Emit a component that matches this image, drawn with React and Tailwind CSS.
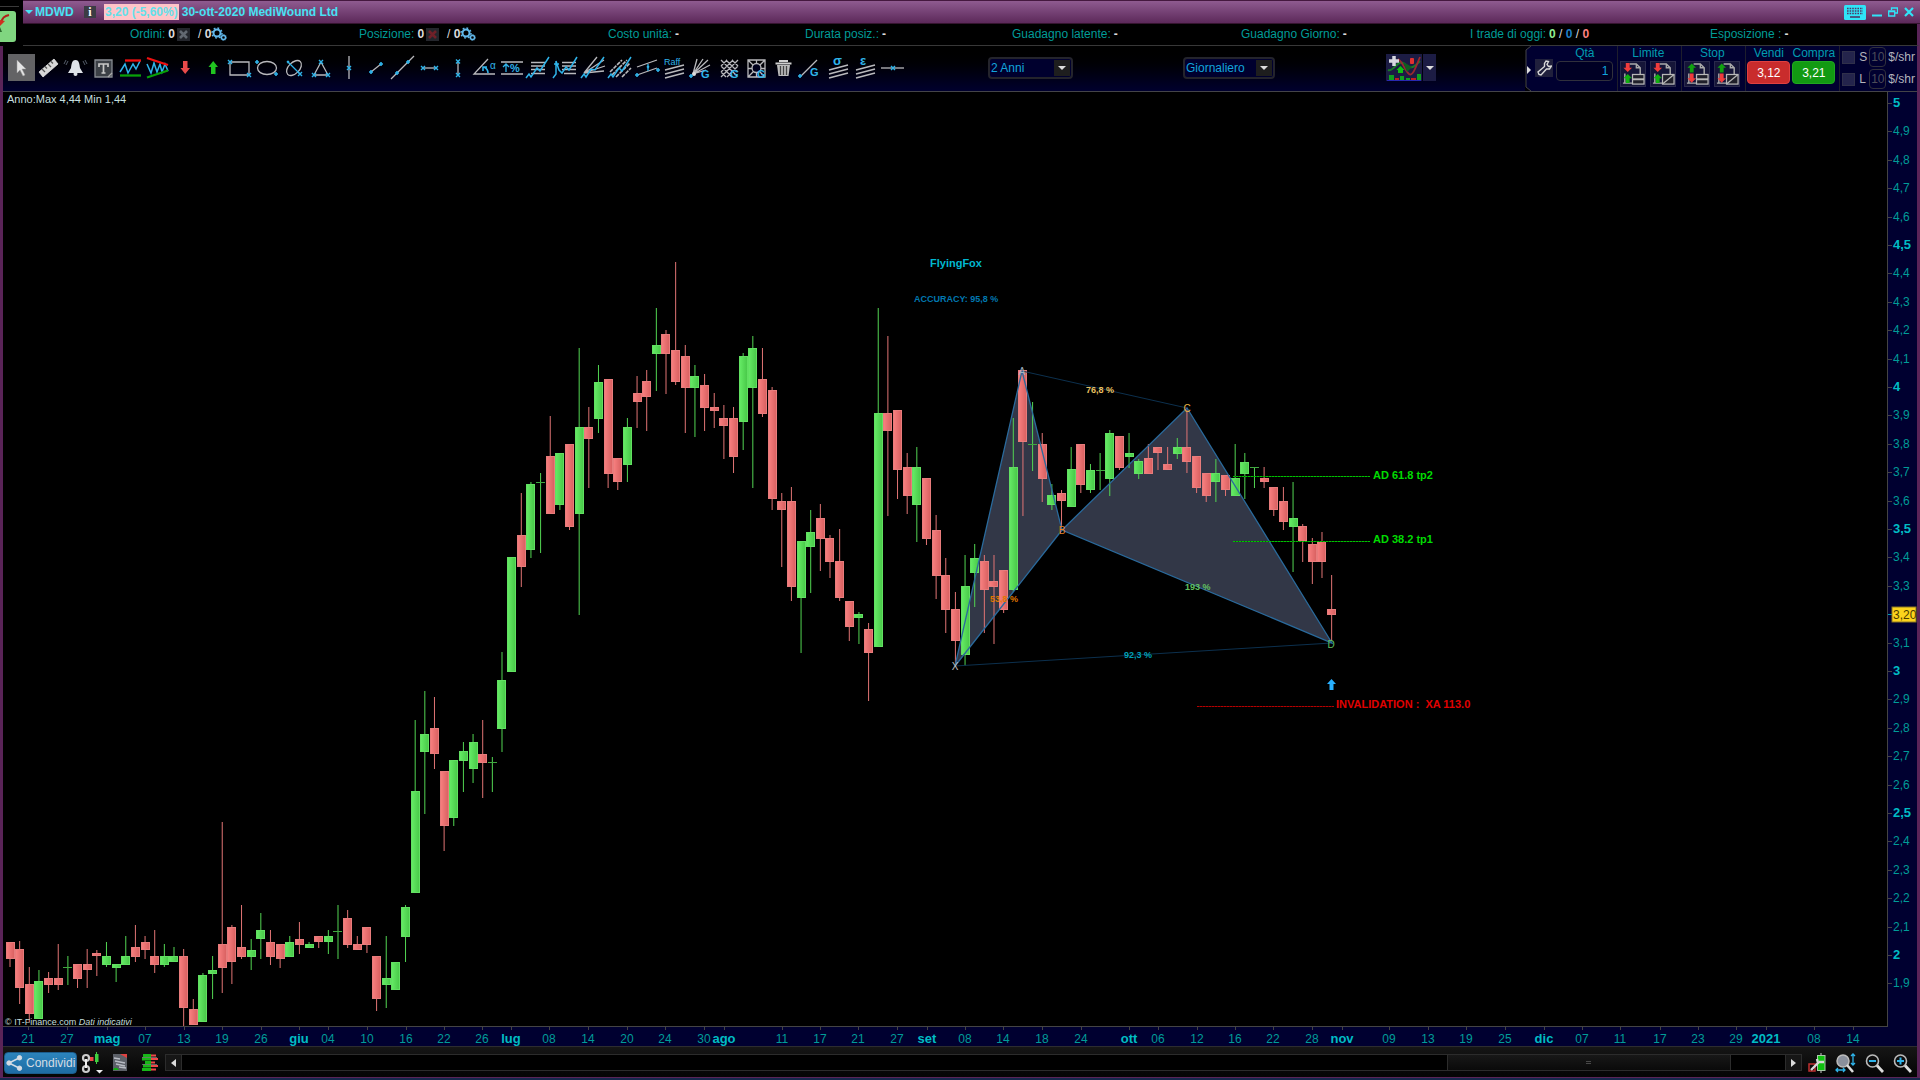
import React from "react";

const FONT = "font-['Liberation_Sans',Arial,sans-serif]";
const CYAN = "#2fb4ea";
const GREY = "#b9b9bd";

/* ---------- market data: [kind, high, bodyTop, bodyBottom, low] ---------- */
const CANDLES = [
  ["r", 942, 942, 959, 967], ["r", 941, 949, 988, 1004], ["r", 967, 984, 1014, 1022], ["g", 970, 981, 1019, 1019],
  ["r", 972, 978, 985, 993], ["r", 944, 978, 985, 990], ["g", 956, 967, 967, 985], ["r", 964, 964, 979, 988],
  ["r", 949, 964, 970, 988], ["r", 950, 953, 956, 976], ["g", 942, 956, 965, 967], ["g", 964, 964, 968, 982],
  ["g", 936, 956, 965, 965], ["r", 925, 947, 957, 962], ["r", 936, 942, 950, 959], ["r", 930, 956, 965, 973],
  ["g", 944, 956, 965, 967], ["g", 947, 956, 962, 962], ["r", 949, 956, 1008, 1026], ["r", 999, 1009, 1025, 1025],
  ["g", 973, 975, 1022, 1022], ["g", 956, 970, 974, 999], ["r", 822, 944, 968, 993], ["r", 925, 927, 962, 984],
  ["r", 905, 947, 957, 959], ["g", 939, 950, 957, 970], ["g", 913, 930, 939, 959], ["r", 930, 942, 957, 965],
  ["r", 944, 944, 959, 968], ["g", 936, 942, 957, 957], ["r", 922, 939, 945, 954], ["g", 942, 944, 948, 948],
  ["r", 936, 936, 942, 948], ["g", 930, 936, 942, 954], ["g", 905, 931, 931, 959], ["r", 910, 918, 945, 948],
  ["r", 936, 944, 950, 950], ["r", 927, 927, 945, 953], ["r", 956, 956, 999, 1011], ["g", 936, 978, 985, 1008],
  ["g", 962, 962, 990, 990], ["g", 905, 907, 937, 962], ["g", 720, 791, 893, 893], ["g", 691, 734, 752, 814],
  ["r", 697, 728, 754, 769], ["r", 771, 771, 826, 851], ["g", 760, 760, 818, 826], ["g", 742, 751, 761, 792],
  ["g", 734, 742, 769, 783], ["r", 720, 754, 763, 798], ["g", 757, 762, 762, 792], ["g", 652, 680, 729, 752],
  ["g", 557, 557, 672, 672], ["r", 493, 535, 567, 587], ["g", 482, 484, 550, 558], ["g", 473, 482, 482, 553],
  ["r", 416, 456, 514, 514], ["g", 453, 453, 505, 510], ["r", 444, 444, 527, 530], ["g", 348, 427, 514, 615],
  ["r", 407, 427, 439, 488], ["g", 365, 382, 419, 433], ["r", 379, 379, 474, 488], ["r", 458, 458, 482, 490],
  ["g", 418, 427, 465, 482], ["r", 376, 393, 402, 428], ["r", 370, 381, 397, 431], ["g", 308, 345, 354, 391],
  ["r", 330, 334, 354, 394], ["r", 262, 350, 382, 385], ["r", 345, 356, 388, 433], ["g", 365, 376, 388, 437],
  ["r", 374, 385, 408, 431], ["r", 393, 407, 411, 428], ["r", 405, 418, 426, 459], ["r", 407, 418, 457, 473],
  ["g", 353, 356, 422, 450], ["g", 336, 348, 388, 488], ["r", 348, 379, 414, 417], ["r", 387, 390, 499, 510],
  ["r", 493, 501, 510, 567], ["r", 487, 501, 587, 601], ["g", 541, 541, 598, 653], ["g", 510, 532, 547, 593],
  ["r", 504, 518, 539, 571], ["r", 535, 538, 562, 578], ["r", 529, 561, 598, 601], ["r", 601, 601, 627, 641],
  ["g", 612, 614, 618, 644], ["r", 623, 629, 653, 701], ["g", 308, 413, 647, 647], ["r", 336, 413, 431, 516],
  ["r", 410, 410, 470, 499], ["r", 453, 467, 496, 514], ["g", 447, 467, 505, 542], ["r", 478, 478, 539, 545],
  ["r", 515, 530, 576, 599], ["r", 558, 575, 610, 633], ["r", 592, 609, 641, 665], ["g", 555, 586, 655, 666],
  ["g", 544, 558, 573, 607], ["r", 555, 561, 590, 633], ["r", 555, 581, 587, 644], ["r", 570, 570, 610, 613],
  ["g", 418, 467, 590, 592], ["r", 370, 370, 442, 516], ["g", 402, 444, 444, 471], ["r", 433, 444, 479, 502],
  ["g", 484, 495, 505, 510], ["r", 490, 493, 501, 527], ["g", 447, 469, 507, 507], ["r", 444, 444, 485, 493],
  ["g", 464, 470, 490, 493], ["g", 453, 470, 470, 490], ["g", 430, 433, 479, 496], ["r", 436, 436, 468, 470],
  ["g", 433, 453, 457, 468], ["g", 459, 461, 474, 479], ["r", 444, 458, 474, 474], ["r", 447, 447, 453, 470],
  ["r", 447, 464, 470, 470], ["g", 438, 447, 454, 459], ["r", 410, 447, 462, 473], ["r", 456, 456, 488, 493],
  ["r", 473, 473, 496, 502], ["g", 459, 473, 482, 502], ["r", 475, 475, 490, 496], ["g", 444, 478, 496, 496],
  ["g", 453, 462, 474, 499], ["g", 467, 467, 467, 488], ["r", 467, 478, 482, 488], ["r", 487, 487, 510, 516],
  ["r", 487, 501, 522, 530], ["g", 482, 518, 527, 572], ["r", 524, 526, 541, 562], ["r", 538, 544, 562, 584],
  ["r", 532, 541, 562, 578], ["r", 575, 609, 615, 641],
];

const DATES = [
  ["21", 28], ["27", 67], ["mag", 107], ["07", 145], ["13", 184], ["19", 222], ["26", 261], ["giu", 299], ["04", 328],
  ["10", 367], ["16", 406], ["22", 444], ["26", 482], ["lug", 511], ["08", 549], ["14", 588], ["20", 627], ["24", 665],
  ["30", 704], ["ago", 724], ["11", 782], ["17", 820], ["21", 858], ["27", 897], ["set", 927], ["08", 965],
  ["14", 1003], ["18", 1042], ["24", 1081], ["ott", 1129], ["06", 1158], ["12", 1197], ["16", 1235], ["22", 1273],
  ["28", 1312], ["nov", 1342], ["09", 1389], ["13", 1428], ["19", 1466], ["25", 1505], ["dic", 1544], ["07", 1582],
  ["11", 1620], ["17", 1660], ["23", 1698], ["29", 1736], ["2021", 1766], ["08", 1814], ["14", 1853],
];
const isMajor = (t) => /[a-z]/.test(t) || t.length === 4;

/* ---------- small marks shared by the drawing tools ---------- */
const X = ({ x, y, s = 2 }) => (
  <path d={`M${x - s} ${y - s}l${2 * s} ${2 * s}M${x + s} ${y - s}l${-2 * s} ${2 * s}`} stroke={CYAN} strokeWidth="1.4" />
);
const P = ({ x, y, s = 2 }) => (
  <path d={`M${x - s} ${y}h${2 * s}M${x} ${y - s}v${2 * s}`} stroke={CYAN} strokeWidth="1.6" />
);
const T = ({ x, y, size = 10, children }) => (
  <text x={x} y={y} fontSize={size} fontWeight="bold" fill={CYAN} stroke="none">{children}</text>
);
const Lines3 = ({ y = 11 }) => (
  <path d={`M4 ${y + 5}L23 ${y}M4 ${y + 9}L23 ${y + 4}M4 ${y + 13}L23 ${y + 8}`} stroke={GREY} strokeWidth="1.5" />
);

const TOOLS = [
  ["Cursore", <path key="a" d="M9 6v13l3-3 3 6 2-1-3-6h4z" fill="#e4e4e4" stroke="#999" strokeWidth=".5" />],
  ["Righello", <g key="a"><path d="M4 18L19 5l4 5L8 23z" fill="#d8d8d8" stroke="#f2f2f2" strokeWidth=".7" /><path d="M7 15l3 3M10 12.500l2 2M13 10l3 3M16 7.500l2 2" stroke="#555" /></g>],
  ["Allarme", <g key="a"><path d="M13.500 6c-4 0-4 5-4.500 8l-3 5h15l-3-5c-.5-3-.5-8-4.500-8z" fill="#dfe3e8" stroke="none" /><circle cx="13.500" cy="20" r="2" fill="#dfe3e8" stroke="none" /><path d="M6 7l-2 4M4 6l-2 4M21 7l2 4M23 6l2 4" stroke="#6b7585" strokeWidth=".8" /></g>],
  ["Testo", <g key="a"><path d="M5 6h17v17H5z" fill="#3c4046" stroke="#878b91" /><path d="M9 13v-3h9v3M13.500 10v9M11.500 19h4" stroke="#c8c8c8" strokeWidth="1.700" /><path d="M18 23l4-4" stroke="#aaa" /></g>],
  ["Supporti e resistenze", <g key="a"><path d="M3 18L8 10l3 9 5-9 3 5 4-8" stroke={CYAN} strokeWidth="1.5" /><path d="M8 6.500h16" stroke="#f01010" strokeWidth="2.300" /><path d="M3 21.500h21" stroke="#08a008" strokeWidth="2.300" /></g>],
  ["Trend", <g key="a"><path d="M3 10l4 9 3-10 3 9 3-8 2 8 3-8 3 7" stroke={CYAN} strokeWidth="1.500" /><path d="M3 4l21 7" stroke="#f01010" strokeWidth="2.300" /><path d="M3 23.500l21-7" stroke="#08a008" strokeWidth="2.300" /></g>],
  ["Freccia giù", <path key="a" d="M12 7h4.500v7h2.500l-4.800 6-4.700-6H12z" fill="#e84a4a" stroke="none" />],
  ["Freccia su", <path key="a" d="M12 20h4.500v-7h2.500l-4.800-6-4.700 6H12z" fill="#20c420" stroke="none" />],
  ["Rettangolo", <g key="a"><path d="M4 8h19v13H4z" /><X x={4} y={8} /><X x={23} y={21} /></g>],
  ["Ellisse", <g key="a"><ellipse cx="14" cy="14" rx="9.500" ry="6.500" /><P x={4} y={8} /><P x={23} y={20} /></g>],
  ["Ellisse inclinata", <g key="a"><ellipse cx="14" cy="14" rx="9" ry="5.500" transform="rotate(-45 14 14)" /><path d="M8 8l12 12" stroke={CYAN} /><X x={8} y={8} s={1} /><X x={20} y={20} /></g>],
  ["Triangolo", <g key="a"><path d="M14 8L7 21h14z" /><X x={14} y={8} /><X x={7} y={21} /><X x={21} y={21} /></g>],
  ["Linea verticale", <g key="a"><path d="M14 2v23" /><X x={14} y={14} /></g>],
  ["Segmento", <g key="a"><path d="M9 18L19 10" /><P x={9} y={18} /><P x={19} y={10} /></g>],
  ["Retta", <g key="a"><path d="M2 25L25 2" /><P x={8} y={19} /><P x={19} y={8} /></g>],
  ["Segmento orizzontale", <g key="a"><path d="M6 14h15" /><X x={7} y={14} /><X x={20} y={14} /></g>],
  ["Segmento verticale", <g key="a"><path d="M14 7v14" /><X x={14} y={7.500} /><X x={14} y={21} /></g>],
  ["Angolo", <g key="a"><path d="M17 5L3 20h21" /><path d="M17 19c0-3-2-5-4-6M12 17v-4h4" stroke={CYAN} strokeWidth="1.600" /><text x="19" y="15" fontSize="10" fill={CYAN} stroke="none">α</text></g>],
  ["Variazione percentuale", <g key="a"><path d="M3 8h22M3 20h22" /><path d="M8 18v-7M5 13l3-3 3 3" stroke={CYAN} /><T x={12} y={18} size={11}>%</T></g>],
  ["Ritracciamenti", <g key="a"><path d="M6 8.500h14M6 12h14M6 15.500h14M6 19.500h14" strokeWidth="1.500" /><path d="M1 24l3-4 2 3 6-9 3 3 9-14" stroke={CYAN} strokeWidth="1.500" /></g>],
  ["Proiezioni", <g key="a"><path d="M10 8.500h14M10 12h14M10 15.500h14M12 19.500h12" strokeWidth="1.500" /><path d="M1 24l3-4V7M2 10h5M4 7l3 9 3 3 4-6 3 3 8-13" stroke={CYAN} strokeWidth="1.500" /></g>],
  ["Ventaglio", <g key="a"><path d="M4 19L17 3M4 19L24 6M4 19L25 12M4 19l20-2" /><path d="M1 24l3-4 2 3 5-8 4 1 9-13" stroke={CYAN} strokeWidth="1.500" /></g>],
  ["Canali", <g key="a"><path d="M3 18L15 6M5 21L20 6M9 23L23 9M15 23l9-9" strokeDasharray="4 1" strokeWidth="1.600" /><path d="M1 24l3-4 2 3 6-9 3 3L24 3" stroke={CYAN} strokeWidth="1.500" /></g>],
  ["Canale parallelo", <g key="a"><path d="M3 13L23 6M3 21l20-7" /><path d="M14 10v7" stroke={CYAN} /><P x={3} y={21} /><P x={24} y={16} /><X x={14} y={13} s={1} /></g>],
  ["Canale Raff", <g key="a"><text x="3" y="11" fontSize="9" fill={CYAN} stroke="none">Raff</text><Lines3 /></g>],
  ["Ventaglio di Gann", <g key="a"><path d="M5 20L9 5M5 20L15 5M5 20L20 6M5 20L22 11M5 20l13-4" /><circle cx="6" cy="20" r="2" fill="#ddd" stroke="none" /><P x={3} y={22} /><T x={13} y={24} size={11}>G</T></g>],
  ["Griglia di Gann", <g key="a"><path d="M5 12l6-6M5 18L17 6M5 23L22 6M11 23l11-11M16 6l6 6M10 6l12 12M5 6l16 16M5 12l11 11M5 18l5 5" /><T x={14} y={24} size={11}>G</T></g>],
  ["Quadrato di Gann", <g key="a"><path d="M5 6h17v17H5zM5 6l17 17M22 6L5 23M13.500 6v17M5 14.500h17" /><circle cx="13.500" cy="14" r="4.500" fill="#00001c" /><T x={14} y={24} size={11}>G</T></g>],
  ["Elimina", <g key="a"><path d="M7 11h13l-1.500 11h-10z" fill="#bcbcbc" stroke="none" /><path d="M5.500 9.500h16M9 7h9" stroke="#d0d0d0" strokeWidth="2" /><path d="M10.500 12v9M13.500 12v9M16.500 12v9" stroke="#444" /></g>],
  ["Linea di Gann", <g key="a"><path d="M4 22L20 6" /><P x={3} y={22} /><T x={13} y={22} size={11}>G</T></g>],
  ["Deviazione standard", <g key="a"><T x={8} y={11} size={13}>σ</T><Lines3 /></g>],
  ["Errore standard", <g key="a"><T x={8} y={11} size={13}>ε</T><Lines3 /></g>],
  ["Linea orizzontale", <g key="a"><path d="M2 14h23" /><X x={14} y={14} /></g>],
];

function Gears() {
  return (
    <svg width="16" height="14" viewBox="0 0 16 14" fill="none" stroke="#62b8ea" aria-hidden="true">
      <circle cx="6" cy="6" r="3.500" strokeWidth="2" /><circle cx="6" cy="6" r="5" strokeWidth="1.500" strokeDasharray="1.800 2.100" />
      <circle cx="12.500" cy="10.500" r="2" strokeWidth="1.400" /><circle cx="12.500" cy="10.500" r="3" strokeWidth="1" strokeDasharray="1 1.300" />
    </svg>
  );
}

function Clear({ color, label }) {
  return (
    <button aria-label={label} className="mr-1 ml-0.5 flex size-[13px] items-center justify-center bg-[#24262c]">
      <svg width="11" height="11" viewBox="0 0 11 11" stroke={color} strokeWidth="2.600" aria-hidden="true"><path d="M2 2l7 7M9 2L2 9" /></svg>
    </button>
  );
}

function Stat({ label, children }) {
  return (
    <div className="flex items-center whitespace-pre">
      <span className="text-[#009c98]">{label}</span>
      <span className="ml-[3px] flex items-center font-bold text-[#dcdcdc]">{children}</span>
    </div>
  );
}

function Header() {
  return (
    <header className="flex">
      <div className="relative w-[23px] shrink-0 bg-black">
        <div className="mt-1.5 h-px w-[19px] bg-[#3a3a3a]" />
        <svg className="absolute top-[11px] left-0" width="16" height="31" viewBox="0 0 16 31" aria-hidden="true">
          <rect x="-6" width="22" height="31" rx="3" fill="#80d680" />
          <path d="M1 12c1-5 3-7 8-8" stroke="#b02018" strokeWidth="2.200" fill="none" /><path d="M0 9l5 1-5 5z" fill="#d03020" /><path d="M0 16l2 5H0z" fill="#2b6a2b" />
        </svg>
      </div>
      <div className="min-w-0 flex-1">
        <div className="flex h-6 items-center border-y border-t-[#45183f] border-b-[#35142f] bg-linear-to-b from-[#8f5b90] to-[#5c295a] pl-0.5 font-bold text-[#48e2f4]">
          <svg width="8" height="4" viewBox="0 0 8 4" aria-hidden="true"><path d="M0 0h8L4 4z" fill="#48e2f4" /></svg>
          <span className="ml-0.5 w-12">MDWD</span>
          <button aria-label="Informazioni" className="ml-px flex size-3 items-center justify-center bg-[#3c3c44] font-['Liberation_Serif',serif] text-xs text-white">i</button>
          <span className="ml-2 bg-[#ffc4c8] px-px text-[#62e0ea]">3,20 (-5,60%)</span>
          <span className="ml-[3px]">30-ott-2020 MediWound Ltd</span>
          <div className="mr-1.5 ml-auto flex items-center gap-1.5">
            <button aria-label="Tastiera">
              <svg width="22" height="15" viewBox="0 0 22 15" aria-hidden="true"><rect width="22" height="15" rx="1.500" fill="#30e4f8" /><path d="M3 3.500h16M3 6h16M3 8.500h16" stroke="#4c3a68" strokeWidth="1.500" strokeDasharray="1.600 1" /><path d="M6 12h10" stroke="#4c3a68" strokeWidth="1.600" /></svg>
            </button>
            <button aria-label="Riduci"><svg width="10" height="12" viewBox="0 0 10 12" aria-hidden="true"><path d="M0 9.500h10" stroke="#30e4f8" strokeWidth="2" /></svg></button>
            <button aria-label="Ripristina"><svg width="10" height="10" viewBox="0 0 10 10" fill="none" stroke="#30e4f8" strokeWidth="1.300" aria-hidden="true"><path d="M3.500 3V1h6v5H7M.7 4h6v5h-6zM.7 4.700h6" /></svg></button>
            <button aria-label="Chiudi"><svg width="10" height="10" viewBox="0 0 10 10" stroke="#30e4f8" strokeWidth="2.200" aria-hidden="true"><path d="M1 1l8 8M9 1L1 9" /></svg></button>
          </div>
        </div>
        <div className="grid h-[22px] grid-cols-[229fr_249fr_197fr_207fr_229fr_229fr_240fr_207fr] items-center border-r-[3px] border-b border-r-[#5a2458] border-b-[#383838] bg-black pb-px pl-[107px]">
          <Stat label="Ordini:">0<Clear color="#626870" label="Cancella ordini" /> <span className="ml-1 font-normal">/ </span>0<Gears /></Stat>
          <Stat label="Posizione:">0<Clear color="#702028" label="Chiudi posizione" /> <span className="ml-1 font-normal">/ </span>0<Gears /></Stat>
          <Stat label="Costo unità:">-</Stat>
          <Stat label="Durata posiz.:">-</Stat>
          <Stat label="Guadagno latente:">-</Stat>
          <Stat label="Guadagno Giorno:">-</Stat>
          <Stat label="I trade di oggi:"><span className="text-[#90ee90]">0</span><span className="font-normal"> / </span><span className="text-[#2080c8]">0</span><span className="font-normal"> / </span><span className="text-[#ff8080]">0</span></Stat>
          <Stat label="Esposizione :">-</Stat>
        </div>
      </div>
    </header>
  );
}

function Picker({ label, value, className }) {
  return (
    <div className={`relative h-[22px] shrink-0 ${className}`}>
      <select aria-label={label} defaultValue={value} className="h-full w-full appearance-none rounded-sm border-2 border-[#24242c] bg-[#00002e] pl-px text-[#12a4dc]">
        <option>{value}</option>
      </select>
      <span className="pointer-events-none absolute top-[3px] right-[3px] flex size-4 items-center justify-center bg-[#1e1e1e]">
        <svg width="8" height="4" viewBox="0 0 8 4" aria-hidden="true"><path d="M0 0h8L4 4z" fill="#dcdcdc" /></svg>
      </span>
    </div>
  );
}

function OrderIcon({ label, up, slash }) {
  return (
    <button aria-label={label} className="size-[26px] border border-[#2a2a4c] bg-[#151538]">
      <svg width="24" height="24" viewBox="0 0 25 25" fill="none" aria-hidden="true">
        <path d="M9 2h7l4 4v16H2M16 2v4h4M4 12v10" stroke="#aaa" strokeWidth="1.500" />
        <path d="M5 1h4v5h2.500L7 10.500 2.500 6H5z" fill={up ? "#10a010" : "#f03c3c"} transform={up ? "rotate(180 7 6)" : undefined} />
        <path d="M5 22h4v-5h2.500L7 12.500 2.500 17H5z" fill={up ? "#f03c3c" : "#10b010"} transform={up ? "rotate(180 7 17)" : undefined} />
        <rect x="12" y="13" width="12" height="10" fill="#20202a" stroke="#b8b8b8" strokeWidth="1.300" />
        {slash ? <path d="M12 23L24 13" stroke="#b8b8b8" strokeWidth="1.300" /> : <path d="M12 18h12" stroke="#b8b8b8" strokeWidth="2" />}
      </svg>
    </button>
  );
}

function Bracket({ name, id }) {
  return (
    <div className="flex h-[22px] items-center">
      <input id={id} type="checkbox" className="size-[13px] appearance-none border border-[#30304a] bg-[#24244c]" />
      <label htmlFor={id} className="ml-1 w-[10px] text-[#b4b4bc]">{name}</label>
      <input aria-label={`${name} distanza`} defaultValue="10" className="h-5 w-[17px] rounded-sm border border-[#30303c] bg-transparent text-center text-[#4c4c58]" />
      <span className="ml-0.5 text-[#b4b4bc]">$/shr</span>
    </div>
  );
}

function OrderPanel() {
  const head = "h-[15px] text-center leading-[14px] text-[#009cb0]";
  return (
    <section aria-label="Ordini rapidi" className="ml-auto flex h-[45px] shrink-0 bg-[#000030]">
      <svg width="9" height="45" viewBox="0 0 9 45" fill="none" aria-hidden="true"><path d="M0 0h6L1 4v37l5 4H0z" fill="#000008" /><path d="M6 0L1 4v37l5 4" stroke="#444" /><path d="M2 20l4 4-4 4z" fill="#ddd" /></svg>
      <button aria-label="Impostazioni" className="mt-[13px] ml-px flex size-[18px] items-center justify-center bg-[#20203c]">
        <svg width="16" height="16" viewBox="0 0 16 16" fill="none" stroke="#d8d8d8" strokeWidth="1.400" aria-hidden="true"><path d="M10 1L8.500 3.500v3L2 12l1 2.500 2 .5 5.500-6h3L15.500 6l-3 .5-1.500-2L12.500 1.500z" /></svg>
      </button>
      <div className="ml-[3px] w-[57px]">
        <label htmlFor="qty" className={`block ${head}`}>Qtà</label>
        <input id="qty" defaultValue="1" className="h-5 w-full rounded-sm border border-[#30303c] bg-[#000024] pr-1 text-right text-[#12a4dc]" />
      </div>
      <div className="ml-1 border-l border-[#1e1e2c] px-0.5">
        <div className={head}>Limite</div>
        <div className="flex gap-1"><OrderIcon label="Ordine limite" /><OrderIcon label="Ordine limite inclinato" slash /></div>
      </div>
      <div className="ml-[3px] border-l border-[#1e1e2c] px-0.5">
        <div className={head}>Stop</div>
        <div className="flex gap-1"><OrderIcon label="Ordine stop" up /><OrderIcon label="Ordine stop inclinato" up slash /></div>
      </div>
      <div className="ml-[3px] flex gap-0.5 border-l border-[#1e1e2c] pl-px">
        <div className="w-[43px]"><div className={head}>Vendi</div><button className="h-[23px] w-full rounded-sm border border-[#e04040] bg-[#c92c2c] text-white">3,12</button></div>
        <div className="w-[43px]"><div className={head}>Compra</div><button className="h-[23px] w-full rounded-sm border border-[#20a820] bg-[#129a12] text-white">3,21</button></div>
      </div>
      <div className="ml-1 flex flex-col border-l border-[#1e1e2c] pr-0.5 pl-0.5"><Bracket name="S" id="s-stop" /><Bracket name="L" id="l-limit" /></div>
    </section>
  );
}

function Toolbar() {
  return (
    <div className="flex h-[46px] items-start border-b border-[#444448] bg-linear-to-b from-black to-[#00002e] pl-[5px]">
      <div className="mt-2 flex w-[898px] shrink-0 justify-between">
        {TOOLS.map(([name, art], i) => (
          <button key={name} aria-label={name} className={i === 0 ? "size-[27px] bg-[#636365]" : "size-[27px]"}>
            <svg width="27" height="27" viewBox="0 0 27 27" fill="none" stroke={GREY} strokeWidth="1.300" aria-hidden="true">{art}</svg>
          </button>
        ))}
      </div>
      <div className="mt-[11px] ml-[82px]"><Picker label="Periodo" value="2 Anni" className="w-[85px]" /></div>
      <div className="mt-[11px] ml-[110px]"><Picker label="Intervallo" value="Giornaliero" className="w-[92px]" /></div>
      <div className="mt-2 ml-[111px] flex shrink-0 gap-px">
        <button aria-label="Aggiungi indicatore" className="bg-[#1c1c44]">
          <svg width="36" height="27" viewBox="0 0 36 27" fill="none" aria-hidden="true">
            <path d="M2 16c6 2 9-10 15-7s7 9 17-2" stroke="#187828" strokeWidth="2" /><path d="M12 5c5 3 7 12 11 15s7-8 11-17" stroke="#982830" strokeWidth="1.800" /><path d="M17 8l4 10 5-5z" fill="#105c20" />
            <path d="M8 2v10M3 7h10" stroke="#d8d8e0" strokeWidth="3.500" /><path d="M12 19h5v-3h1.500L14.500 12l-4 4H12z" fill="#10c010" /><rect x="24" y="4" width="4" height="6" rx="1" fill="#e03030" />
            <path d="M3 21h5v5H3zM14 22h4v4h-4zM31 20h4v6h-4zM20 24h4v2h-4z" fill="#10a020" /><path d="M9 24h4v2H9zM25 24h5v2h-5z" fill="#c02020" /><path d="M1 26.500h34" stroke="#2828b0" />
          </svg>
        </button>
        <button aria-label="Altri indicatori" className="flex w-[13px] items-center justify-center bg-[#1c1c44]"><svg width="8" height="4" viewBox="0 0 8 4" aria-hidden="true"><path d="M0 0h8L4 4z" fill="#dcdcdc" /></svg></button>
      </div>
      <OrderPanel />
    </div>
  );
}

function Candle({ index, data }) {
  const [kind, high, top, bottom, low] = data;
  const x = 10 + index * 9.647;
  const red = kind === "r";
  const left = Math.round(x - 4.5);
  return (
    <g>
      <rect x={x - 0.5} y={high} width="1" height={low - high} fill={red ? "#e07474" : "#52d452"} />
      {bottom === top
        ? <rect x={left} y={top} width="9" height="1" fill="#40a840" />
        : <rect x={left + 0.5} y={top + 0.5} width="8" height={bottom - top - 1} fill={red ? "url(#red)" : "url(#green)"} stroke={red ? "#e87c7c" : "#62e062"} />}
    </g>
  );
}

function Chart() {
  return (
    <svg className={`block h-auto w-full ${FONT}`} viewBox="3 92 1885 935" role="img" aria-label="Grafico MDWD giornaliero">
      <defs>
        <linearGradient id="red"><stop offset="0" stopColor="#f88080" /><stop offset="1" stopColor="#d86060" /></linearGradient>
        <linearGradient id="green"><stop offset="0" stopColor="#66ec66" /><stop offset="1" stopColor="#48c848" /></linearGradient>
      </defs>
      <rect x="3" y="92" width="1885" height="935" fill="#000" />
      <path d="M955 666L1022 371 1062 530zM1062 530L1187 408 1332 643z" fill="#323747" />
      {CANDLES.map((c, i) => <Candle key={i} index={i} data={c} />)}
      <path d="M1022 371L1187 408M955 666L1332 643" stroke="#0c304e" />
      <path d="M955 666L1022 371 1062 530zM1062 530L1187 408 1332 643z" fill="none" stroke="#2a6a9c" strokeWidth="1.300" />
      <path d="M1233 476.500h137M1233 541.500h137" stroke="#006c00" />
      <path d="M1233 476.500h137M1233 541.500h137" stroke="#00c000" strokeDasharray="2 1" />
      <path d="M1197 706.500h137" stroke="#680000" />
      <path d="M1197 706.500h137" stroke="#b40000" strokeDasharray="2 1" />
      <path d="M1331.500 679l4.500 5h-2.500v6h-4v-6H1327z" fill="#28b0ff" />
      <g fontSize="11" fontWeight="bold">
        <text x="930" y="267" fill="#00b8d0">FlyingFox</text>
        <text x="1373" y="479" fill="#00dc00">AD 61.8 tp2</text>
        <text x="1373" y="543" fill="#00dc00">AD 38.2 tp1</text>
        <text x="1336" y="708" fill="#e00000" xmlSpace="preserve">INVALIDATION :  XA 113.0</text>
      </g>
      <g fontSize="9" fontWeight="bold">
        <text x="914" y="302" fill="#0078b0">ACCURACY: 95,8 %</text>
        <text x="1086" y="393" fill="#e8c060">76,8 %</text>
        <text x="990" y="602" fill="#e07800">53,8 %</text>
        <text x="1185" y="590" fill="#60c060">193 %</text>
        <text x="1124" y="658" fill="#00a0b8">92,3 %</text>
      </g>
      <g fontSize="10" textAnchor="middle">
        <text x="955" y="670" fill="#c0c0c0">X</text>
        <text x="1022" y="375" fill="#a0b0c0">A</text>
        <text x="1062" y="534" fill="#e88020">B</text>
        <text x="1187" y="412" fill="#e8b040">C</text>
        <text x="1331" y="648" fill="#60c060">D</text>
      </g>
      <text x="7" y="103" fontSize="11" fill="#c4dede">Anno:Max 4,44 Min 1,44</text>
      <text x="5" y="1025" fontSize="9" fill="#c4dede">© IT-Finance.com <tspan fontStyle="italic">Dati indicativi</tspan></text>
      <path d="M1887.500 92v935M3 1026.500h1885" stroke="#444" />
    </svg>
  );
}

function PriceAxis() {
  const ticks = Array.from({ length: 32 }, (_, i) => 50 - i);
  return (
    <svg className={`block h-auto w-full bg-[#000030] ${FONT}`} viewBox="1888 92 29 935" aria-label="Prezzi" role="img">
      {ticks.map((t, i) => {
        const y = 103 + Math.round(i * 28.4);
        const major = t % 5 === 0;
        if (t === 32) return null;
        return (
          <g key={t}>
            <path d={`M1888 ${y + 0.5}h4`} stroke="#444" />
            <text x="1893" y={y + 4} fontSize={major ? 13 : 12} fontWeight={major ? "bold" : "normal"} fill={major ? "#00bcc4" : "#009c98"}>
              {t % 10 === 0 ? t / 10 : `${Math.floor(t / 10)},${t % 10}`}
            </text>
          </g>
        );
      })}
      <path d="M1888 614.500h4" stroke="#00a0b0" />
      <rect x="1892" y="607" width="24" height="15" fill="#fcd41c" stroke="#8c7824" />
      <text x="1893" y="619" fontSize="12" fill="#4c3c00">3,20</text>
    </svg>
  );
}

function TimeAxis() {
  return (
    <svg className={`block h-auto w-full bg-[#000030] ${FONT}`} viewBox="3 1027 1914 20" aria-label="Date" role="img">
      {DATES.map(([t, x]) => (
        <g key={x}>
          <path d={`M${x + 0.5} 1027v3`} stroke="#444" />
          <text x={x} y="1043" textAnchor="middle" fontSize={isMajor(t) ? 13 : 12} fontWeight={isMajor(t) ? "bold" : "normal"} fill={isMajor(t) ? "#00bcc4" : "#009c98"}>{t}</text>
        </g>
      ))}
      <path d="M3 1046.500h1914" stroke="#2c2c30" />
    </svg>
  );
}

function Footer() {
  const arrow = "flex h-[17px] w-[17px] shrink-0 items-center justify-center border border-[#2c2c2c] bg-[#161616]";
  return (
    <footer className="flex h-[30px] items-center bg-linear-to-b from-[#161616] to-[#050505] pt-px pl-px">
      <button className="flex h-[22px] shrink-0 items-center gap-[3px] rounded-sm border border-[#1c5c8c] bg-linear-to-b from-[#2c84bc] to-[#1e6ca4] px-px text-[#d4dce4]">
        <svg width="17" height="16" viewBox="0 0 17 16" fill="#d4dce4" stroke="#d4dce4" aria-hidden="true"><path d="M13 3L3 8l10 5" fill="none" strokeWidth="1.500" /><circle cx="13.500" cy="2.800" r="2.200" /><circle cx="3" cy="8" r="2.200" /><circle cx="13.500" cy="13.200" r="2.200" /></svg>
        <span>Condividi</span>
      </button>
      <button aria-label="Collega" className="ml-1 shrink-0">
        <svg width="22" height="22" viewBox="0 0 22 22" fill="none" aria-hidden="true"><circle cx="5" cy="6" r="3" stroke="#ccc" strokeWidth="2.200" /><circle cx="5" cy="17" r="3" stroke="#ccc" strokeWidth="2.200" /><path d="M5 7v9" stroke="#eee" strokeWidth="2" /><rect x="9" y="5" width="3.500" height="4" fill="#f04848" /><path d="M15.500 0v12" stroke="#40d040" /><rect x="14" y="2" width="3.500" height="8" fill="#40d040" /><path d="M15 18h7l-3.500 3.500z" fill="#eee" /></svg>
      </button>
      <button aria-label="Lista" className="ml-2.5 shrink-0">
        <svg width="14" height="17" viewBox="0 0 14 17" aria-hidden="true"><rect width="14" height="17" fill="#5c6068" /><path d="M1 4l6 1M2 7l10 2M3 10l9 2M6 13l7 1" stroke="#b8bcc4" strokeWidth="1.300" /><path d="M7 0h7v4z" fill="#e04040" /><path d="M0 16c1-3 4-3 6 0z" fill="#10b010" /></svg>
      </button>
      <button aria-label="Book" className="ml-3.5 shrink-0">
        <svg width="18" height="18" viewBox="0 0 18 18" aria-hidden="true"><path d="M2 1.500h8M1 5h9M4 8.500h6M2 12h8M1 15.500h9" stroke="#18b818" strokeWidth="2.800" /><path d="M10 1.500h5M10 5h7M10 8.500h4M10 12h7M10 15.500h5" stroke="#f04848" strokeWidth="2.200" /><path d="M1 3.500h15M1 10.500h15" stroke="#999" strokeWidth=".6" /></svg>
      </button>
      <button aria-label="Scorri a sinistra" className={`ml-1.5 ${arrow}`}><svg width="5" height="8" viewBox="0 0 5 8" aria-hidden="true"><path d="M5 0v8L0 4z" fill="#ddd" /></svg></button>
      <div className="grid h-[17px] min-w-0 flex-1 grid-cols-[1263fr_284fr_54fr] border-y border-[#2c2c2c] bg-black">
        <div className="col-start-2 flex flex-col items-center justify-center gap-px border-x border-[#2c2c2c] bg-linear-to-b from-[#181818] to-[#0a0a0a]"><i className="h-px w-[5px] bg-[#484848]" /><i className="h-px w-[5px] bg-[#484848]" /></div>
      </div>
      <button aria-label="Scorri a destra" className={arrow}><svg width="5" height="8" viewBox="0 0 5 8" aria-hidden="true"><path d="M0 0v8l5-4z" fill="#ddd" /></svg></button>
      <div className="mr-[5px] ml-1.5 flex shrink-0 items-center gap-[9px]">
        <button aria-label="Proprietà"><svg width="18" height="20" viewBox="0 0 18 20" fill="none" aria-hidden="true"><path d="M13 0v20" stroke="#c8c8c8" /><rect x="9.500" y="2.500" width="7.500" height="15" fill="#10c010" stroke="#a8c8a8" /><path d="M1 11h6v7H1z" stroke="#c03030" strokeWidth="1.500" /><path d="M3 17l8-8M10 10l-1-4M11 9h5" stroke="#d8d8d8" strokeWidth="2.400" /></svg></button>
        <button aria-label="Adatta zoom"><svg width="21" height="20" viewBox="0 0 21 20" fill="none" aria-hidden="true"><circle cx="8" cy="8" r="6" fill="#8a909c" stroke="#bbb" strokeWidth="1.500" /><path d="M12 12l6 7" stroke="#ddd" strokeWidth="2.600" /><path d="M18 1v11M16 3l2-2 2 2M16 10l2 2 2-2M1 17h9M3 15l-2 2 2 2M8 15l2 2-2 2" stroke={CYAN} strokeWidth="1.300" /></svg></button>
        {["Riduci", "Ingrandisci"].map((n, i) => (
          <button key={n} aria-label={n}><svg width="19" height="20" viewBox="0 0 19 20" fill="none" aria-hidden="true"><circle cx="7.500" cy="8" r="6" stroke="#bbb" strokeWidth="1.600" /><path d="M12 12.500l6 6.500" stroke="#ddd" strokeWidth="2.800" /><path d={i ? "M4 8h7M7.500 4.500v7" : "M4 8h7"} stroke={CYAN} strokeWidth="2" /></svg></button>
        ))}
      </div>
    </footer>
  );
}

export default function App() {
  return (
    <div className={`min-h-screen overflow-hidden bg-[#16284c] text-xs ${FONT}`}>
      <Header />
      <main className="border-x-[3px] border-b border-[#5a2458]">
        <Toolbar />
        <div className="grid grid-cols-[1885fr_29fr] items-start">
          <Chart />
          <PriceAxis />
        </div>
        <TimeAxis />
        <Footer />
      </main>
      <div className="h-0.5 bg-[#16284c]" />
    </div>
  );
}
